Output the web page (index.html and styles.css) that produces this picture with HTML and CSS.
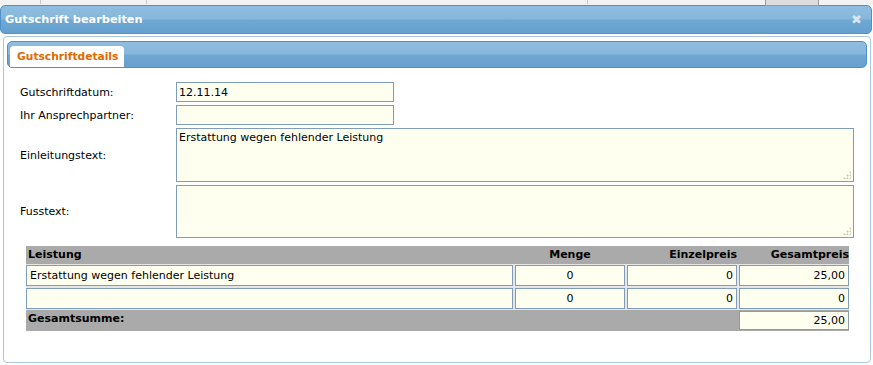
FILE: index.html
```html
<!DOCTYPE html>
<html lang="de">
<head>
    <meta charset="UTF-8">
    <title>Gutschrift bearbeiten</title>
    <link rel="stylesheet" href="styles.css">
</head>
<body>
    <!-- Seite hinter dem Dialog -->
    <div class="backdrop">
        <span class="bd-cell c1"></span>
        <span class="bd-cell c2"></span>
        <span class="bd-cell c3"></span>
        <span class="bd-btn"></span>
    </div>

    <div class="dialog">
        <div class="dialog-title">
            <span>Gutschrift bearbeiten</span>
            <span class="close">&#10006;</span>
        </div>

        <div class="dialog-body">
            <div class="tabbar">
                <div class="tab">Gutschriftdetails</div>
            </div>

            <div class="form">
                <div class="row">
                    <label for="datum">Gutschriftdatum:</label>
                    <input type="text" id="datum" class="field short" value="12.11.14">
                </div>
                <div class="row">
                    <label for="partner">Ihr Ansprechpartner:</label>
                    <input type="text" id="partner" class="field short" value="">
                </div>
                <div class="row">
                    <label for="einleitung">Einleitungstext:</label>
                    <div class="area-wrap">
                        <textarea id="einleitung" class="field area">Erstattung wegen fehlender Leistung</textarea>
                        <span class="grip"></span>
                    </div>
                </div>
                <div class="row">
                    <label for="fuss">Fusstext:</label>
                    <div class="area-wrap">
                        <textarea id="fuss" class="field area second"></textarea>
                        <span class="grip"></span>
                    </div>
                </div>
            </div>

            <!-- Positionen -->
            <div class="positions">
                <div class="pos-row head">
                    <div class="left">Leistung</div>
                    <div class="center">Menge</div>
                    <div class="right">Einzelpreis</div>
                    <div class="right">Gesamtpreis</div>
                </div>
                <div class="pos-row item">
                    <input type="text" class="cell" value="Erstattung wegen fehlender Leistung">
                    <input type="text" class="cell center" value="0">
                    <input type="text" class="cell right" value="0">
                    <input type="text" class="cell right" value="25,00">
                </div>
                <div class="pos-row item">
                    <input type="text" class="cell" value="">
                    <input type="text" class="cell center" value="0">
                    <input type="text" class="cell right" value="0">
                    <input type="text" class="cell right" value="0">
                </div>
                <div class="pos-row foot">
                    <div class="sum-label">Gesamtsumme:</div>
                    <input type="text" class="cell right total" value="25,00" readonly>
                </div>
            </div>
        </div>
    </div>
</body>
</html>
```

FILE: styles.css
```css
body {
    margin: 0;
    padding: 0;
    background: #fff;
    font-family: 'DejaVu Sans', sans-serif;
    font-size: 11px;
    color: #000;
    overflow: hidden;
}

.backdrop {
    position: relative;
    height: 5px;
    background: #f2f2f2;
}

.bd-cell {
    position: absolute;
    top: 0;
    height: 4px;
    border-right: 1px solid #c8c8c8;
}

.c1 { left: 0; width: 40px; }
.c2 { left: 41px; width: 105px; }
.c3 { left: 147px; width: 440px; }

.bd-btn {
    position: absolute;
    top: -8px;
    left: 765px;
    width: 52px;
    height: 12px;
    background: #ddd;
    border: 1px solid #999;
}

.dialog-title {
    height: 27px;
    margin-right: 1px;
    padding: 0 9px 0 4px;
    display: flex;
    align-items: center;
    justify-content: space-between;
    border: 1px solid #4e90c8;
    border-radius: 5px;
    background: linear-gradient(to bottom, #8fbde0 0%, #86b7dc 48%, #6ea8d3 52%, #65a0ce 100%);
    color: #fff;
    font-weight: bold;
    font-size: 11.3px;
}

.close {
    color: #d8e6f2;
    font-size: 13px;
    font-weight: bold;
}

.dialog-body {
    margin: 2px 2px 0 3px;
    padding: 4px 3px 0 3px;
    height: 321px;
    border: 1px solid #a9c8e4;
    border-radius: 4px;
}

.tabbar {
    box-sizing: border-box;
    height: 27px;
    padding: 4px 0 0 2px;
    border: 1px solid #4e90c8;
    border-radius: 5px;
    background: linear-gradient(to bottom, #8fbde0 0%, #86b7dc 48%, #6ea8d3 52%, #65a0ce 100%);
}

.tab {
    display: inline-block;
    height: 21px;
    line-height: 21px;
    padding: 0 6px 0 7px;
    background: #fff;
    border-radius: 4px 4px 0 0;
    color: #e26a00;
    font-weight: bold;
    font-size: 10.7px;
}

.form {
    padding: 14px 0 0 13px;
}

.row {
    display: flex;
    align-items: center;
    margin-bottom: 3px;
}

.row label {
    width: 156px;
}

.field {
    box-sizing: border-box;
    margin: 0;
    padding: 1px 2px;
    border: 1px solid #7f9db9;
    background: #fffff0;
    font-family: inherit;
    font-size: 11px;
    color: #000;
    outline: none;
}

.short {
    width: 218px;
    height: 20px;
}

.area-wrap {
    position: relative;
}

.area {
    display: block;
    width: 678px;
    height: 54px;
    resize: none;
    padding: 2px 2px;
}

.area.second {
    height: 53px;
}

/* Griff unten rechts */
.grip {
    position: absolute;
    right: 3px;
    bottom: 3px;
    width: 8px;
    height: 8px;
    background:
        radial-gradient(circle, #c9c9b8 0.9px, transparent 1.1px) 6px 0 / 3px 3px no-repeat,
        radial-gradient(circle, #c9c9b8 0.9px, transparent 1.1px) 3px 3px / 3px 3px no-repeat,
        radial-gradient(circle, #c9c9b8 0.9px, transparent 1.1px) 6px 3px / 3px 3px no-repeat,
        radial-gradient(circle, #c9c9b8 0.9px, transparent 1.1px) 0 6px / 3px 3px no-repeat,
        radial-gradient(circle, #c9c9b8 0.9px, transparent 1.1px) 3px 6px / 3px 3px no-repeat,
        radial-gradient(circle, #c9c9b8 0.9px, transparent 1.1px) 6px 6px / 3px 3px no-repeat;
}

.positions {
    width: 823px;
    margin: 8px 0 0 19px;
}

.pos-row {
    display: grid;
    grid-template-columns: 487px 110px 110px 110px;
    column-gap: 2px;
}

.head {
    height: 18px;
    line-height: 18px;
    background: #aaa;
    font-weight: bold;
    font-size: 11px;
}

.head .left {
    padding-left: 2px;
}

.item {
    padding: 1px 0;
    background: #e6e6e6;
}

.foot {
    height: 21px;
    align-items: center;
    background: #aaa;
    grid-template-columns: 711px 110px;
}

.sum-label {
    padding-left: 2px;
    font-weight: bold;
    align-self: start;
    line-height: 18px;
}

.center { text-align: center; }
.right { text-align: right; }

.cell {
    box-sizing: border-box;
    height: 21px;
    margin: 0;
    padding: 1px 3px;
    border: 1px solid #7f9db9;
    background: #fffff0;
    font-family: inherit;
    font-size: 11px;
    color: #000;
    outline: none;
}

.total {
    height: 19px;
    border-color: #8c9aa8;
}
```
